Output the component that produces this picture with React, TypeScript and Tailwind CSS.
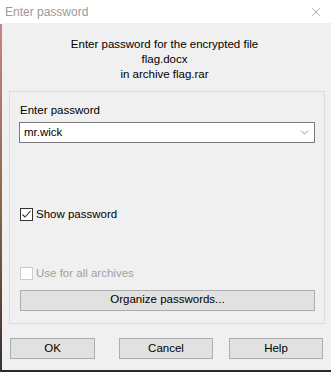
import { ChevronDown, X } from "lucide-react";

const font = { fontFamily: '"Segoe UI", "Liberation Sans", Arial, sans-serif' };

function Btn({ label, className }: { label: string; className: string }) {
  return (
    <div
      className={`flex items-center justify-center h-[21px] border border-[#adadad] bg-[#e1e1e1] text-[11.5px] text-black ${className}`}
    >
      {label}
    </div>
  );
}

export default function App() {
  return (
    <div className="w-[331px] h-[372px] flex bg-[#f0f0f0] overflow-hidden" style={font}>
      {/* desktop bleed on the left edge */}
      <div className="w-[2px] flex flex-col">
        <div className="h-[24px] bg-white" />
        <div className="flex-1 bg-gradient-to-b from-[#c9838a] via-[#8a6a4a] to-[#3a3030]" />
      </div>

      <div className="flex-1 flex flex-col">
        {/* title bar */}
        <div className="h-[23px] bg-white flex items-center justify-between pl-[3px] pr-[8px]">
          <span className="text-[12px] text-[#9a9a9a]">Enter password</span>
          <X size={14} strokeWidth={1.2} className="text-[#8a8a8a]" />
        </div>

        <div className="flex-1 flex flex-col">
          {/* prompt */}
          <div className="pt-[14px] flex flex-col items-center text-[11.5px] leading-[15px] text-black pr-[4px]">
            <span>Enter password for the encrypted file</span>
            <span>flag.docx</span>
            <span>in archive flag.rar</span>
          </div>

          {/* group box */}
          <div className="mt-[9px] ml-[7px] mr-[6px] h-[233px] border border-[#dcdcdc] px-[9px] pt-[11px] flex flex-col">
            <span className="text-[11.5px] text-black leading-[15px] ml-[1px]">Enter password</span>
            <div className="mt-[4px] h-[21px] border border-[#7a7a7a] bg-white flex items-center justify-between pl-[4px] pr-[3px]">
              <span className="text-[11.5px] text-black">mr.wick</span>
              <ChevronDown size={13} strokeWidth={1.2} className="text-[#5a5a5a]" />
            </div>

            <div className="mt-[63px] flex items-center gap-[3px] ml-[1px]">
              <div className="w-[13px] h-[13px] border border-[#333] bg-white flex items-center justify-center">
                <svg width="11" height="11" viewBox="0 0 11 11">
                  <path d="M1.5 5.5 L4 8 L9.5 2" fill="none" stroke="#333" strokeWidth="1.1" />
                </svg>
              </div>
              <span className="text-[11.5px] text-black">Show password</span>
            </div>

            <div className="mt-[42px] flex items-center gap-[3px] ml-[1px]">
              <div className="w-[13px] h-[13px] border border-[#cccccc] bg-white" />
              <span className="text-[11.5px] text-[#a0a0a0]">Use for all archives</span>
            </div>

            <Btn label="Organize passwords..." className="mt-[7px] ml-[1px]" />
          </div>

          {/* bottom buttons */}
          <div className="mt-[14px] flex pl-[8px]">
            <Btn label="OK" className="w-[85px]" />
            <Btn label="Cancel" className="w-[94px] ml-[24px]" />
            <Btn label="Help" className="w-[94px] ml-[16px]" />
          </div>
        </div>

        <div className="h-[2px] bg-[#2b2b2b]" />
      </div>
    </div>
  );
}
